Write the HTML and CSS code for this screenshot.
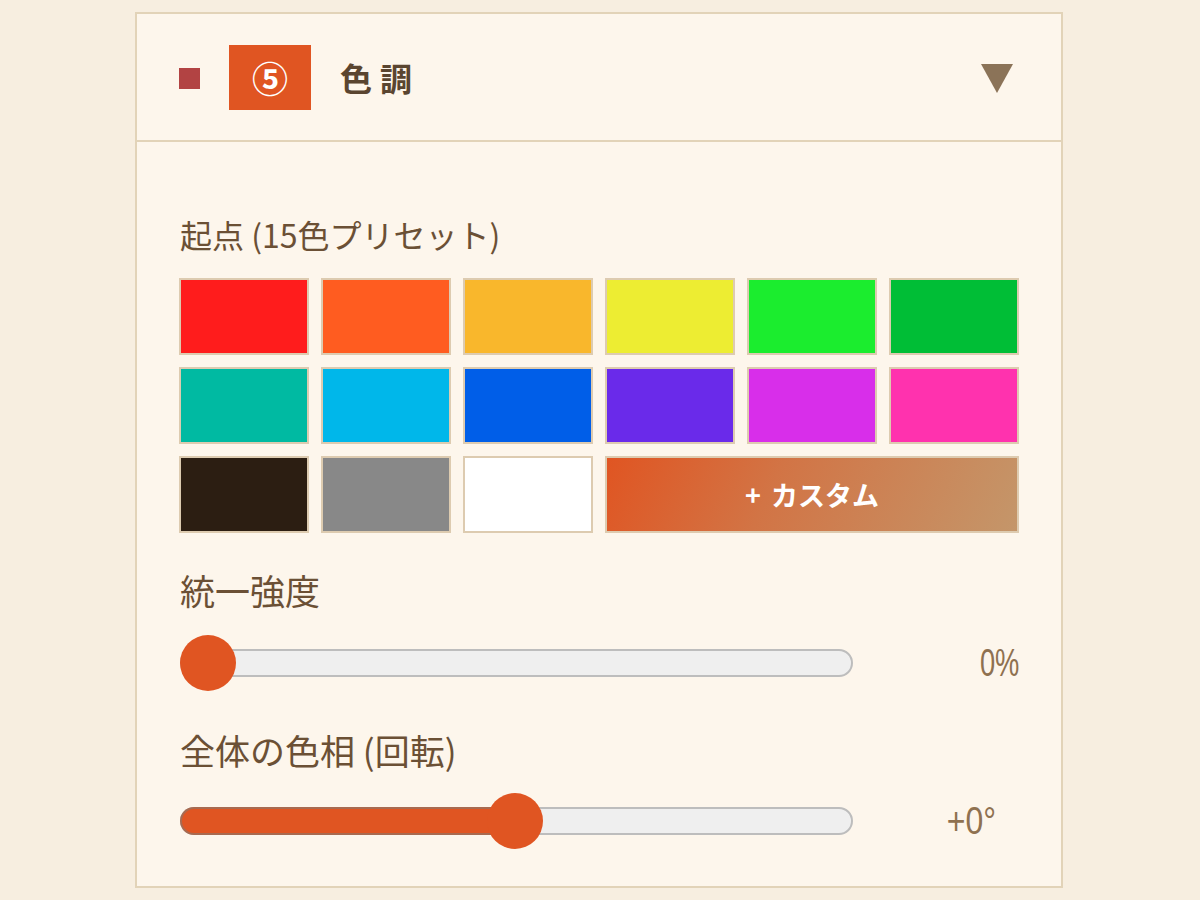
FILE: index.html
```html
<!DOCTYPE html>
<html lang="ja">
<head>
<meta charset="utf-8">
<title>色調</title>
<link rel="stylesheet" href="styles.css">
</head>
<body>
<section class="panel">
  <header class="panel-head">
    <span class="dot"></span>
    <span class="step">⑤</span>
    <h2 class="title">色調</h2>
    <span class="caret"></span>
  </header>
  <div class="panel-body">
    <div class="label label-first">起点 (15色プリセット)</div>
    <div class="swatches">
      <button class="sw" style="background:#ff1c1c"></button>
      <button class="sw" style="background:#ff5c20"></button>
      <button class="sw" style="background:#f9b72c"></button>
      <button class="sw" style="background:#eded32"></button>
      <button class="sw" style="background:#1bed2e"></button>
      <button class="sw" style="background:#00be36"></button>
      <button class="sw" style="background:#00baa2"></button>
      <button class="sw" style="background:#00b7ea"></button>
      <button class="sw" style="background:#005ee8"></button>
      <button class="sw" style="background:#6a2aea"></button>
      <button class="sw" style="background:#d82eea"></button>
      <button class="sw" style="background:#ff32ae"></button>
      <button class="sw" style="background:#2c1e12"></button>
      <button class="sw" style="background:#888888"></button>
      <button class="sw" style="background:#ffffff"></button>
      <button class="sw custom">+ カスタム</button>
    </div>
    <div class="label label-big label-gap">統一強度</div>
    <div class="slider-row">
      <div class="track">
        <div class="thumb" style="left:0%"></div>
      </div>
      <div class="value"><span class="num">0%</span></div>
    </div>
    <div class="label label-big label-gap">全体の色相 (回転)</div>
    <div class="slider-row slider-row2">
      <div class="track">
        <div class="fill" style="width:50%"></div>
        <div class="thumb" style="left:calc(50% - 28px)"></div>
      </div>
      <div class="value value-deg"><span class="num">+0°</span></div>
    </div>
  </div>
</section>
</body>
</html>
```

FILE: styles.css
```css
* { box-sizing: border-box; }
html, body { margin: 0; padding: 0; }
body {
  background: #f7eee0;
  font-family: "Noto Sans CJK JP", "Noto Sans", sans-serif;
  color: #6b5035;
  height: 900px;
  overflow: hidden;
}
.panel {
  width: 928px;
  margin: 12px 0 0 135px;
  height: 876px;
  background: #fdf6ec;
  border: 2px solid #e2d3b8;
}
.panel-head {
  height: 128px;
  display: flex;
  align-items: center;
  padding: 0 48px 0 42px;
  border-bottom: 2px solid #e2d3b8;
}
.dot {
  width: 21px;
  height: 21px;
  background: #b24343;
  flex: none;
  margin-top: 2px;
}
.step {
  width: 82px;
  height: 65px;
  margin-left: 29px;
  background: #e05522;
  color: #ffffff;
  display: flex;
  align-items: center;
  justify-content: center;
  font-size: 36px;
  font-weight: 700;
  font-family: "Noto Sans CJK JP", "DejaVu Sans", sans-serif;
  flex: none;
}
.title {
  margin: 0 0 0 29px;
  font-size: 32px;
  font-weight: 700;
  letter-spacing: 8px;
  color: #5a4530;
  flex: 1;
}
.caret {
  width: 0;
  height: 0;
  border-left: 16px solid transparent;
  border-right: 16px solid transparent;
  border-top: 29px solid #8b7358;
  margin-top: 2px;
}
.panel-body {
  padding: 70px 42px 0 42px;
}
.label {
  font-size: 32px;
  line-height: 44px;
  color: #6b5035;
  margin-left: 1px;
}
.label-big {
  font-size: 35px;
  line-height: 46px;
}
.swatches {
  margin-top: 22px;
  display: grid;
  grid-template-columns: repeat(6, 130px);
  grid-auto-rows: 77px;
  gap: 12px;
}
.sw {
  border: 2px solid #ddcbb0;
  padding: 0;
  margin: 0;
  cursor: pointer;
}
.sw.custom {
  grid-column: span 3;
  background: linear-gradient(115deg, #e05522 0%, #d27445 40%, #c4966a 100%);
  color: #ffffff;
  font-family: "Noto Sans CJK JP", sans-serif;
  font-weight: 700;
  font-size: 27px;
  word-spacing: 4px;
}
.label-gap { margin-top: 34px; }
.slider-row {
  display: flex;
  align-items: center;
  height: 60px;
  margin-top: 20px;
}
.slider-row2 { margin-top: 18px; }
.track {
  position: relative;
  width: 673px;
  height: 28px;
  margin-left: 1px;
  border: 2px solid #bdbdbd;
  border-radius: 14px;
  background: #efefef;
  flex: none;
}
.fill {
  position: absolute;
  left: -2px;
  top: -2px;
  height: 28px;
  background: #e05522;
  border: 2px solid #a86a50;
  border-right: none;
  border-radius: 14px 0 0 14px;
}
.thumb {
  position: absolute;
  top: -16px;
  width: 56px;
  height: 56px;
  margin-left: -2px;
  border-radius: 50%;
  background: #e05522;
}
.value {
  flex: 1;
  text-align: right;
  font-family: "Liberation Sans", "Arial", sans-serif;
  font-size: 39px;
  color: #8f7150;
}
.num {
  display: inline-block;
  transform: scaleX(0.7);
  transform-origin: right center;
}
.value-deg { padding-right: 23px; }
.value-deg .num { transform: scaleX(0.82); }
```
